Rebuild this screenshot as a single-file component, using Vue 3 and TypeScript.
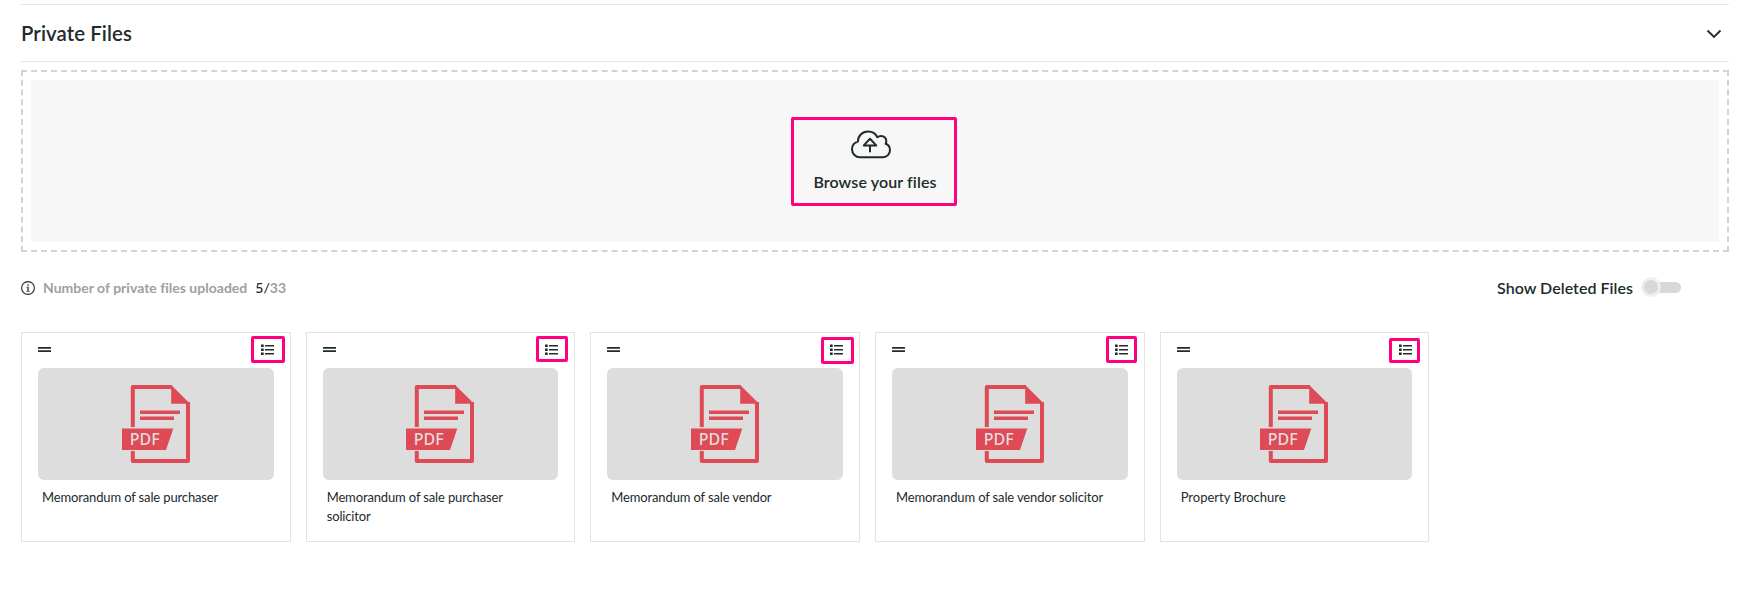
<script setup lang="ts">
import { ref } from 'vue'

interface PrivateFile {
  name: string
  tight: boolean
  mark: { left: number; top: number; width: number; height: number }
}

const maxFiles = 33
const showDeleted = ref(false)

const files: PrivateFile[] = [
  { name: 'Memorandum of sale purchaser', tight: true, mark: { left: 229, top: 3, width: 34, height: 27 } },
  { name: 'Memorandum of sale purchaser solicitor', tight: true, mark: { left: 229.3, top: 3, width: 32, height: 26 } },
  { name: 'Memorandum of sale vendor', tight: true, mark: { left: 229.7, top: 4, width: 33, height: 27 } },
  { name: 'Memorandum of sale vendor solicitor', tight: true, mark: { left: 230, top: 3, width: 31, height: 27 } },
  { name: 'Property Brochure', tight: false, mark: { left: 228.3, top: 5, width: 31, height: 25 } },
]

const markStyle = (f: PrivateFile) => ({
  left: `${f.mark.left}px`,
  top: `${f.mark.top}px`,
  width: `${f.mark.width}px`,
  height: `${f.mark.height}px`,
})
</script>

<template>
  <main class="page">
    <header class="section-head">
      <h2 class="title">Private Files</h2>
      <svg class="chevron" width="16" height="10" viewBox="0 0 16 10">
        <path d="M1.5 1.5 8 8 14.5 1.5" fill="none" stroke="#212b2b" stroke-width="1.8" />
      </svg>
    </header>

    <section class="dropzone">
      <div class="drop-inner">
        <button class="browse" type="button">
          <svg class="cloud" width="40" height="29" viewBox="0 0 40 29">
            <g fill="none" stroke="#212b2b" stroke-width="2" stroke-linejoin="round" stroke-linecap="round">
              <path d="M9 27.2C4.6 27.2 1 23.8 1 19.3C1 15.6 3.4 12.6 6.9 11.6C7 5.8 11.5 1.4 17 1.4C21.3 1.4 24.8 3.8 26.4 7.2C27.4 6.3 28.7 5.9 30 5.9C33.2 5.9 35.5 8.4 35.3 11.5C35.3 12.4 35 13.1 34.6 13.8C37.2 14.7 39 17 39 20C39 24 36 27.2 32 27.2Z" />
              <path d="M19 22.3V15.4M12.8 15.4L19 8.8L25.2 15.4Z" stroke-linecap="butt" />
            </g>
          </svg>
          <span class="browse-label">Browse your files</span>
        </button>
      </div>
    </section>

    <div class="toolbar">
      <div class="counter">
        <svg width="14" height="14" viewBox="0 0 14 14">
          <circle cx="7" cy="7" r="6.4" fill="none" stroke="#212b2b" stroke-width="1.1" />
          <path d="M6.3 3.2h1.5v1.5H6.3zM5.5 5.8h2.3v4.1h1v.9H5.3v-.9h1V6.7h-.8z" fill="#444c4c" />
        </svg>
        <span class="counter-label">Number of private files uploaded</span>
        <span class="count"><span class="used">{{ files.length }}/</span>{{ maxFiles }}</span>
      </div>
      <div class="deleted">
        <span>Show Deleted Files</span>
        <button class="toggle" :class="{ on: showDeleted }" type="button" @click="showDeleted = !showDeleted">
          <span class="knob"></span>
        </button>
      </div>
    </div>

    <section class="grid">
      <div v-for="file in files" :key="file.name" class="cell">
        <article class="card">
          <div class="card-bar">
            <svg width="13" height="12" viewBox="0 0 13 12">
              <path d="M0 3.9h13M0 7.1h13" stroke="#212b2b" stroke-width="1.7" />
            </svg>
            <svg width="13" height="12" viewBox="0 0 13 12">
              <path d="M0 1.7h2.7M0 5.7h2.7M0 9.7h2.7" stroke="#212b2b" stroke-width="2.6" />
              <path d="M4 1.7h9M4 5.7h9M4 9.7h9" stroke="#212b2b" stroke-width="1.6" />
            </svg>
          </div>
          <div class="thumb">
            <svg width="68" height="78" viewBox="0 0 68 78">
              <path d="M10.8 42V2H50M66 17V76H10.8V66" fill="none" stroke="#de4a56" stroke-width="4" stroke-linejoin="round" />
              <path d="M49.2 0L68 18.7H49.2z" fill="#de4a56" />
              <path d="M18 27.2h40M18 33.2h34" stroke="#de4a56" stroke-width="3.4" />
              <path d="M0 43.5h51.3L44 65H0z" fill="#de4a56" />
              <text x="7.7" y="59.7" textLength="30" lengthAdjust="spacingAndGlyphs" class="pdf">PDF</text>
            </svg>
          </div>
          <p class="name" :class="{ tight: file.tight }">{{ file.name }}</p>
          <span class="mark" :style="markStyle(file)"></span>
        </article>
      </div>
    </section>
  </main>
</template>

<style>
body {
  margin: 0;
  background: #fff;
}
</style>

<style scoped>
.page {
  box-sizing: border-box;
  width: 1739px;
  height: 595px;
  padding: 4px 10px 0 21px;
  overflow: hidden;
  font-family: Lato, 'Liberation Sans', sans-serif;
  color: #212b2b;
}
.section-head {
  box-sizing: border-box;
  height: 58px;
  padding-right: 7px;
  border-top: 1px solid #e6e6e6;
  border-bottom: 1px solid #e6e6e6;
  display: flex;
  align-items: center;
  justify-content: space-between;
}
.title {
  margin: 0;
  font-size: 20.4px;
  line-height: 24px;
  font-weight: 600;
  letter-spacing: 0.08px;
}
.chevron {
  margin-top: 1px;
}
.dropzone {
  box-sizing: border-box;
  height: 182px;
  margin-top: 8px;
  padding: 8px;
  border: 2px dashed #d3d3d3;
}
.drop-inner {
  height: 162px;
  background: #f7f7f7;
  display: flex;
  justify-content: center;
  align-items: flex-start;
}
.browse {
  box-sizing: border-box;
  width: 166px;
  height: 89px;
  margin: 37px 2px 0 0;
  padding: 10px 0 0;
  border: 3px solid #ff0080;
  border-radius: 2px;
  background: transparent;
  color: inherit;
  font-family: inherit;
  display: flex;
  flex-direction: column;
  align-items: center;
}
.cloud {
  margin-right: 6px;
}
.browse-label {
  margin-top: 13px;
  margin-left: 2px;
  font-size: 16px;
  line-height: 20px;
  font-weight: 600;
  letter-spacing: 0.11px;
}
.toolbar {
  height: 20px;
  margin-top: 26px;
  padding-right: 48px;
  display: flex;
  align-items: center;
  justify-content: space-between;
}
.counter {
  display: flex;
  align-items: center;
  font-size: 14px;
  line-height: 20px;
  font-weight: 700;
  color: #a0a0a0;
}
.counter-label {
  margin-left: 8px;
  letter-spacing: 0.01px;
}
.count {
  margin-left: 8px;
}
.used {
  color: #212b2b;
  font-weight: 500;
}
.deleted {
  display: flex;
  align-items: center;
  gap: 8px;
  font-size: 16px;
  line-height: 20px;
  font-weight: 600;
  letter-spacing: 0.03px;
}
.toggle {
  width: 40px;
  height: 20px;
  margin-top: -2px;
  padding: 0;
  border: 0;
  background: transparent;
  display: flex;
  align-items: center;
}
.toggle::after {
  content: '';
  width: 25px;
  height: 11px;
  margin-left: -5px;
  border-radius: 0 6px 6px 0;
  background: #d8d8d8;
}
.knob {
  box-sizing: border-box;
  width: 20px;
  height: 20px;
  border: 3px solid #efefef;
  border-radius: 50%;
  background: #d8d8d8;
  flex: none;
  z-index: 1;
}
.toggle.on {
  flex-direction: row-reverse;
}
.toggle.on::after {
  margin: 0 -5px 0 0;
  border-radius: 6px 0 0 6px;
}
.grid {
  margin-top: 34px;
  display: grid;
  grid-template-columns: repeat(6, 1fr);
}
.cell {
  padding-right: 15px;
}
.card {
  box-sizing: border-box;
  position: relative;
  height: 210px;
  padding: 11px 16px 0;
  border: 1px solid #e3e3e3;
}
.card-bar {
  height: 12px;
  display: flex;
  justify-content: space-between;
}
.thumb {
  height: 112px;
  margin-top: 12px;
  border-radius: 6px;
  background: #ddd;
  display: flex;
  align-items: center;
  justify-content: center;
}
.pdf {
  font-family: 'Noto Sans', 'Open Sans', sans-serif;
  font-size: 15.4px;
  font-weight: 500;
  fill: #e5dcdd;
}
.name {
  margin: 8px 20px 0 4px;
  font-size: 13px;
  line-height: 19px;
}
.name.tight {
  letter-spacing: -0.14px;
}
.mark {
  box-sizing: border-box;
  position: absolute;
  border: 3px solid #ff0080;
  border-radius: 2px;
}
</style>
